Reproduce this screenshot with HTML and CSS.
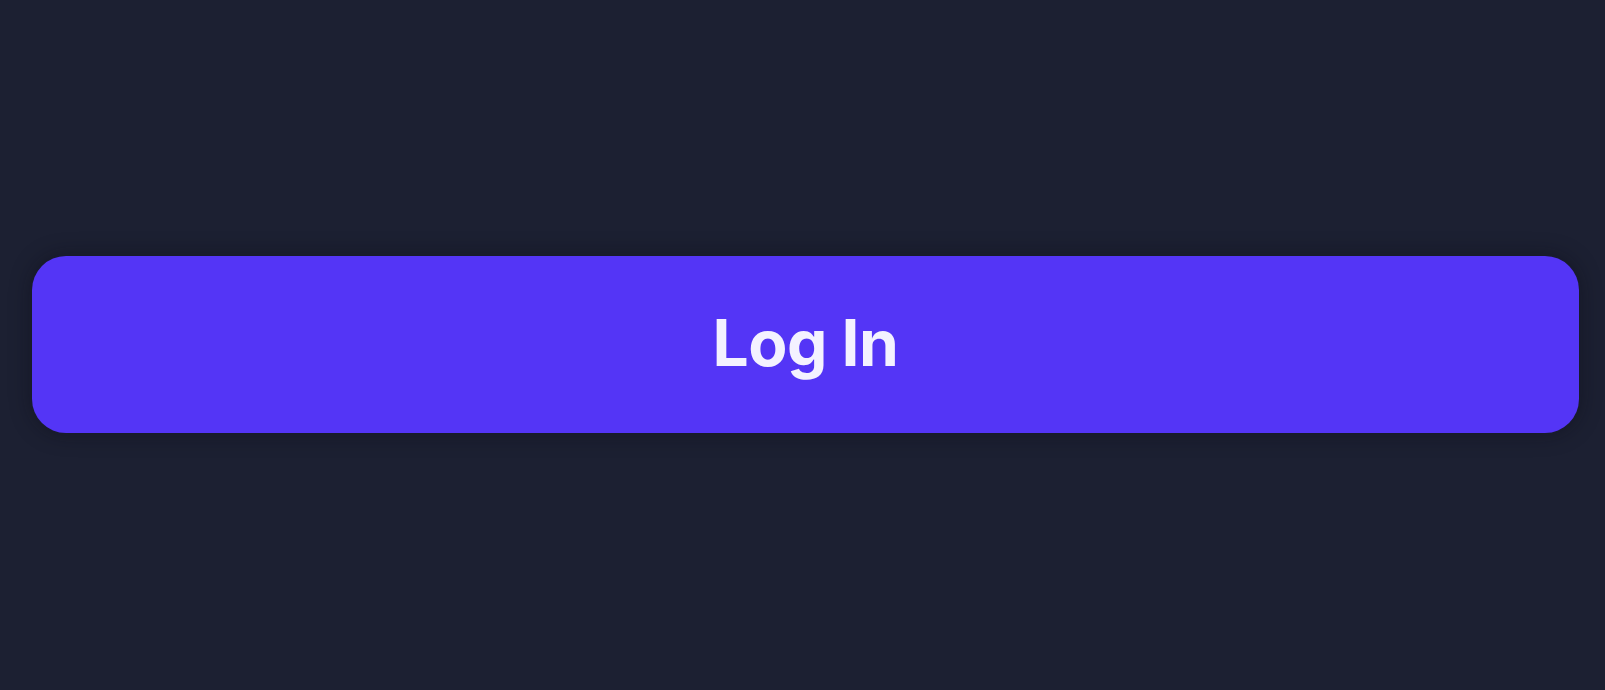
FILE: index.html
```html
<!DOCTYPE html>
<html>
<head>
<meta charset="utf-8">
<link rel="stylesheet" href="styles.css">
</head>
<body>
<main class="page">
  <button class="login-btn">Log In</button>
</main>
</body>
</html>
```

FILE: styles.css
```css
html, body {
  margin: 0;
  padding: 0;
  height: 100%;
  background: #1c2032;
}
.page {
  box-sizing: border-box;
  height: 690px;
  padding: 256px 26px 0 32px;
}
.login-btn {
  display: flex;
  align-items: center;
  justify-content: center;
  width: 100%;
  height: 177px;
  border: none;
  border-radius: 34px;
  background: #5435f6;
  color: #f4f2ff;
  font-family: Inter, "Liberation Sans", sans-serif;
  font-weight: 700;
  font-size: 64px;
  letter-spacing: -0.5px;
  box-shadow: 0 0 22px rgba(10, 12, 22, 0.45);
  padding: 0;
  padding-bottom: 4px;
}
```
